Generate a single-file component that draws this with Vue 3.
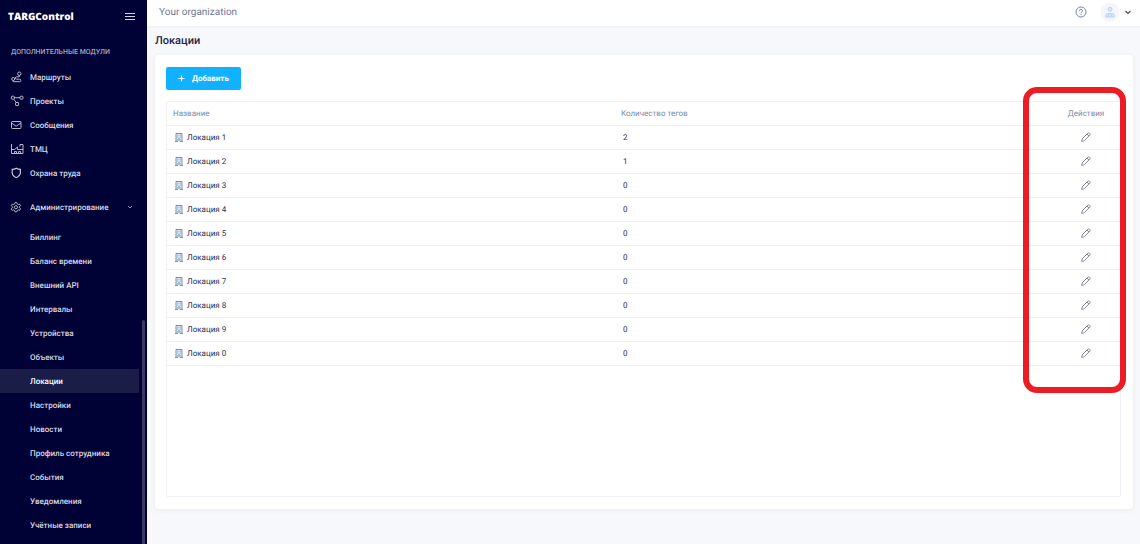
<script setup>
import { ref } from 'vue'

const modules = [
  { label: 'Маршруты', icon: 'route' },
  { label: 'Проекты', icon: 'project' },
  { label: 'Сообщения', icon: 'mail' },
  { label: 'ТМЦ', icon: 'factory' },
  { label: 'Охрана труда', icon: 'shield' }
]
const adminItems = [
  'Биллинг', 'Баланс времени', 'Внешний API', 'Интервалы', 'Устройства',
  'Объекты', 'Локации', 'Настройки', 'Новости', 'Профиль сотрудника',
  'События', 'Уведомления', 'Учётные записи'
]
const active = ref('Локации')
const rows = [
  ['Локация 1', 2], ['Локация 2', 1], ['Локация 3', 0], ['Локация 4', 0],
  ['Локация 5', 0], ['Локация 6', 0], ['Локация 7', 0], ['Локация 8', 0],
  ['Локация 9', 0], ['Локация 0', 0]
]
</script>

<template>
  <div class="page">
    <aside class="sidebar">
      <div class="brand">
        <span class="logo">TARGControl</span>
        <button class="plain burger" type="button" aria-label="Меню">
          <svg width="10" height="10" viewBox="0 0 10 10"><path d="M0 2.5h10M0 5.5h10M0 8.5h10" stroke="#d5d5e2" stroke-width="1" /></svg>
        </button>
      </div>
      <h2 class="section">Дополнительные модули</h2>
      <nav class="modules">
        <a v-for="m in modules" :key="m.label" class="module" href="#">
          <svg v-if="m.icon === 'route'" class="ico" viewBox="0 0 14 14">
            <circle cx="9.3" cy="3.7" r="1.7" /><circle cx="3.2" cy="9" r="1.5" />
            <path d="M9.3 5.4v1.4H6.6a1.2 1.2 0 0 0 0 2.4h3a1.2 1.2 0 0 1 0 2.5H3.2v-1.2" />
          </svg>
          <svg v-else-if="m.icon === 'project'" class="ico" viewBox="0 0 14 14">
            <rect x="1.3" y="2.2" width="3" height="3" rx="0.8" /><rect x="10" y="2.2" width="3" height="3" rx="0.8" /><rect x="5.6" y="8.5" width="3" height="3" rx="0.5" />
            <path d="M4.3 3.7H10M3.7 5.2l2.6 3.3" />
          </svg>
          <svg v-else-if="m.icon === 'mail'" class="ico" viewBox="0 0 14 14">
            <rect x="1.5" y="3.5" width="9.5" height="7" rx="0.8" /><path d="M1.5 5l4.7 3.2L11 5" />
          </svg>
          <svg v-else-if="m.icon === 'factory'" class="ico" viewBox="0 0 14 14">
            <path d="M1.5 2v9.5H13v-9h-3v2.2M1.5 7.5h3.2L7.5 5v2.500H13M4.500 11.500v-2h2v2M8.500 11.500v-2h2v2" />
          </svg>
          <svg v-else class="ico" viewBox="0 0 14 14">
            <path class="bold" d="M6.3 2.3C5 3.2 3.6 3.4 2.2 3.4v3.2c0 2.6 2 4.2 4.1 5.1 2.1-.9 4.1-2.5 4.1-5.1V3.4C9 3.4 7.6 3.2 6.3 2.3z" />
          </svg>
          <span>{{ m.label }}</span>
        </a>
      </nav>
      <button class="plain group" type="button" aria-expanded="true">
        <svg class="ico" viewBox="0 0 14 14">
          <path d="M5 2.6h1.8l.4 1.3 1 .6 1.4-.4.9 1.5-1 1v1.2l1 1-.9 1.5-1.4-.4-1 .6-.4 1.3H5l-.4-1.3-1-.6-1.4.4-.9-1.5 1-1V6.6l-1-1 .9-1.5 1.4.4 1-.6z" />
          <circle cx="5.9" cy="7.2" r="1.6" />
        </svg>
        <span>Администрирование</span>
        <svg class="chev" width="6" height="6" viewBox="0 0 6 6"><path d="M1 2l2 2 2-2" fill="none" stroke="#b9b9cc" stroke-width="0.8" /></svg>
      </button>
      <nav class="admin">
        <a v-for="a in adminItems" :key="a" href="#" :class="{ active: a === active }" @click.prevent="active = a">{{ a }}</a>
      </nav>
      <span class="thumb"></span>
    </aside>

    <div class="content">
      <header class="topbar">
        <span class="org">Your organization</span>
        <button class="plain" type="button" aria-label="Помощь">
          <svg width="12" height="12" viewBox="0 0 12 12" fill="none" stroke="#6b7a99">
            <circle cx="6" cy="6" r="5" stroke-width="0.9" /><path d="M4.5 4.8a1.5 1.4 0 1 1 2.2 1.2Q6 6.4 6 7.1" stroke-width="1" /><path d="M6 8.1v1" stroke-width="1" />
          </svg>
        </button>
        <button class="plain user" type="button" aria-label="Профиль">
          <svg width="20" height="20" viewBox="0 0 20 20">
            <circle cx="10" cy="10" r="9.5" fill="#f4f6fb" />
            <circle cx="10" cy="7.3" r="2" fill="#d6e8f8" stroke="#b4d3ef" stroke-width="0.9" />
            <path d="M5.8 15v-1.8q0-1.7 1.7-1.7h5q1.7 0 1.7 1.7V15z" fill="#d6e8f8" stroke="#b4d3ef" stroke-width="0.9" />
            <path d="M8.5 12v2.5M11.5 12v2.5" stroke="#b4d3ef" stroke-width="0.8" />
          </svg>
          <svg width="6" height="6" viewBox="0 0 6 6"><path d="M0.5 2L3 4.5l2.5-2.5" fill="none" stroke="#5a3a5c" stroke-width="1.1" /></svg>
        </button>
      </header>

      <main class="main">
        <h1>Локации</h1>
        <section class="card">
          <button class="add" type="button">
            <svg width="7" height="7" viewBox="0 0 7 7"><path d="M3.5 0.5v6M0.5 3.5h6" stroke="#fff" stroke-width="1.2" /></svg>
            <span>Добавить</span>
          </button>
          <div class="table-box">
            <table>
              <thead>
                <tr><th class="name">Название</th><th>Количество тегов</th><th class="act">Действия</th></tr>
              </thead>
              <tbody>
                <tr v-for="[name, count] in rows" :key="name">
                  <td>
                    <span class="loc">
                      <svg width="8" height="9" viewBox="0 0 8 9">
                        <path d="M1 8.500V0.500h6v8" fill="#dcebf8" stroke="#6a84a6" stroke-width="0.9" />
                        <path d="M0 8.500h3M5 8.500h3M3 8.500V6h2v2.500" fill="#fff" stroke="#6a84a6" stroke-width="0.8" />
                        <path d="M2.300 2.200h1M4.700 2.200h1M2.300 4.200h1M4.700 4.200h1" stroke="#a8796c" stroke-width="0.9" />
                      </svg>
                      <span>{{ name }}</span>
                    </span>
                  </td>
                  <td class="count">{{ count }}</td>
                  <td class="act">
                    <button class="plain" type="button" :aria-label="'Изменить: ' + name">
                      <svg width="10" height="10" viewBox="0 0 10 10" fill="none" stroke="#69708c" stroke-width="0.8">
                        <path d="M0.600 9.400l.6-2.600 5.700-5.700q.7-.7 1.500 0l.5.5q.7.8 0 1.500L3.200 8.800z" /><path d="M6 2l2 2" />
                      </svg>
                    </button>
                  </td>
                </tr>
              </tbody>
            </table>
            <span class="highlight"></span>
          </div>
        </section>
      </main>
    </div>
  </div>
</template>

<style>
body { margin: 0; background: #f7f8fc; }
</style>

<style scoped>
* { box-sizing: border-box; }
.page {
  display: flex;
  min-height: 100vh;
  font-family: Roboto, "Liberation Sans", sans-serif;
  font-size: 8px;
  line-height: 13px;
  color: #2b2f54;
  text-rendering: geometricPrecision;
}
button { text-rendering: inherit; }
.plain { border: 0; padding: 0; background: none; font: inherit; color: inherit; display: flex; align-items: center; cursor: pointer; }
a { color: inherit; text-decoration: none; }
svg { display: block; flex: none; }
.sidebar { position: relative; flex: none; width: 147px; background: #000134; color: #d8d8e4; font-weight: 500; }
.brand { display: flex; align-items: center; justify-content: space-between; height: 32px; padding: 0 12px 0 8px; }
.logo { font: 800 10px/16px "Open Sans", sans-serif; color: #fff; }
.section { margin: 14px 0 7px 11px; font-size: 7px; line-height: 12px; font-weight: 500; text-transform: uppercase; white-space: nowrap; color: #a5a5ba; }
.module { display: flex; align-items: center; gap: 6px; height: 24px; padding-left: 10px; }
.ico { width: 14px; height: 14px; fill: none; stroke: #c9c9d8; stroke-width: 0.9; }
.ico .bold { stroke-width: 1.2; }
.group { width: 100%; height: 24px; margin-top: 10px; padding: 0 14px 0 10px; gap: 6px; }
.chev { margin-left: auto; }
.admin { margin-top: 6px; padding-bottom: 8px; }
.admin a { display: flex; align-items: center; height: 24px; margin-right: 8px; padding-left: 30px; }
.admin .active { background: #1b1d49; color: #fff; }
.thumb { position: absolute; right: 2px; top: 320px; bottom: 0; width: 3px; border-radius: 2px 2px 0 0; background: #393963; }
.content { flex: 1; min-width: 0; display: flex; flex-direction: column; }
.topbar { display: flex; align-items: center; height: 26px; padding: 0 9px 2px 12px; background: #fff; box-shadow: 0 1px 2px #eceef2; }
.org { margin-right: auto; font-size: 10px; color: #6f7893; }
.user { gap: 5px; margin-left: 13px; }
.main { flex: 1; display: flex; flex-direction: column; padding: 7px 7px 36px 8px; }
h1 { margin: 0 0 6px; font-size: 11px; line-height: 16px; font-weight: 500; color: #1e2145; }
.card { flex: 1; display: flex; flex-direction: column; align-items: flex-start; padding: 12px 12px 12px 11px; border-radius: 4px; background: #fff; box-shadow: 0 1px 4px 1px #eceef2; }
.add { display: flex; align-items: center; gap: 7px; height: 23px; padding: 0 12px; border: 0; border-radius: 2px; background: #10b1ff; color: #fff; font: 700 8px/13px Roboto, sans-serif; cursor: pointer; }
.table-box { position: relative; flex: 1; align-self: stretch; margin-top: 11px; border: 1px solid #eff1f5; border-radius: 2px; }
table { width: 100%; border-collapse: collapse; table-layout: fixed; }
th, td { height: 24px; padding: 0 0 0 6px; border-bottom: 1px solid #ebeef4; text-align: left; }
th { height: 23px; font-weight: 400; color: #7d8baa; }
.name { width: 47%; }
td.count { padding-left: 8px; }
th.act, td.act { width: 68px; padding: 0; text-align: center; }
td.act .plain { margin: 0 auto; }
.loc { display: flex; align-items: center; gap: 4px; padding-left: 2px; }
.highlight { position: absolute; top: -15px; right: -6px; width: 103px; height: 306px; border: 6px solid #ed1c24; border-radius: 14px; pointer-events: none; }
</style>
